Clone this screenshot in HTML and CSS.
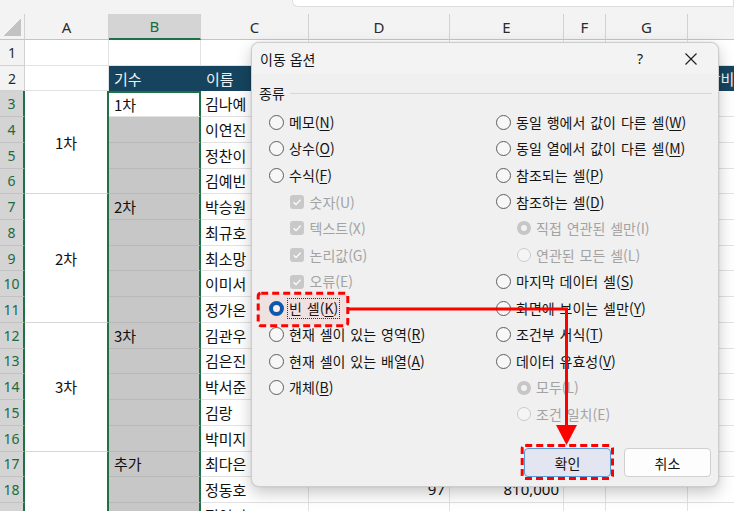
FILE: index.html
```html
<!DOCTYPE html>
<html lang="ko">
<head>
<meta charset="utf-8">
<title>이동 옵션</title>
<link rel="stylesheet" href="styles.css">
</head>
<body>
<div class="sheet">
  <div class="topbar"><div class="fbar"></div></div>
  <div class="grid">
    <div class="ch corner"></div><div class="ch">A</div><div class="ch sel">B</div><div class="ch">C</div><div class="ch">D</div><div class="ch">E</div><div class="ch">F</div><div class="ch">G</div><div class="ch">H</div>

    <div class="rh">1</div><div class="c"></div><div class="c"></div><div class="c"></div><div class="c"></div><div class="c"></div><div class="c"></div><div class="c"></div><div class="c"></div>
    <div class="rh">2</div><div class="c"></div><div class="c hd">기수</div><div class="c hd">이름</div><div class="c hd">점수</div><div class="c hd">금액</div><div class="c hd"></div><div class="c hd"></div><div class="c hd">장학비</div>

    <div class="rh s">3</div><div class="c a r4">1차</div><div class="c b act">1차</div><div class="c">김나예</div><div class="c"></div><div class="c"></div><div class="c"></div><div class="c"></div><div class="c"></div>
    <div class="rh s">4</div><div class="c b"></div><div class="c">이연진</div><div class="c"></div><div class="c"></div><div class="c"></div><div class="c"></div><div class="c"></div>
    <div class="rh s">5</div><div class="c b"></div><div class="c">정찬이</div><div class="c"></div><div class="c"></div><div class="c"></div><div class="c"></div><div class="c"></div>
    <div class="rh s">6</div><div class="c b"></div><div class="c">김예빈</div><div class="c"></div><div class="c"></div><div class="c"></div><div class="c"></div><div class="c"></div>

    <div class="rh s">7</div><div class="c a r5">2차</div><div class="c b">2차</div><div class="c">박승원</div><div class="c"></div><div class="c"></div><div class="c"></div><div class="c"></div><div class="c"></div>
    <div class="rh s">8</div><div class="c b"></div><div class="c">최규호</div><div class="c"></div><div class="c"></div><div class="c"></div><div class="c"></div><div class="c"></div>
    <div class="rh s">9</div><div class="c b"></div><div class="c">최소망</div><div class="c"></div><div class="c"></div><div class="c"></div><div class="c"></div><div class="c"></div>
    <div class="rh s">10</div><div class="c b"></div><div class="c">이미서</div><div class="c"></div><div class="c"></div><div class="c"></div><div class="c"></div><div class="c"></div>
    <div class="rh s">11</div><div class="c b"></div><div class="c">정가온</div><div class="c"></div><div class="c"></div><div class="c"></div><div class="c"></div><div class="c"></div>

    <div class="rh s">12</div><div class="c a r5">3차</div><div class="c b">3차</div><div class="c">김관우</div><div class="c"></div><div class="c"></div><div class="c"></div><div class="c"></div><div class="c"></div>
    <div class="rh s">13</div><div class="c b"></div><div class="c">김은진</div><div class="c"></div><div class="c"></div><div class="c"></div><div class="c"></div><div class="c"></div>
    <div class="rh s">14</div><div class="c b"></div><div class="c">박서준</div><div class="c"></div><div class="c"></div><div class="c"></div><div class="c"></div><div class="c"></div>
    <div class="rh s">15</div><div class="c b"></div><div class="c">김랑</div><div class="c"></div><div class="c"></div><div class="c"></div><div class="c"></div><div class="c"></div>
    <div class="rh s">16</div><div class="c b"></div><div class="c">박미지</div><div class="c"></div><div class="c"></div><div class="c"></div><div class="c"></div><div class="c"></div>

    <div class="rh s">17</div><div class="c a r3"></div><div class="c b">추가</div><div class="c">최다은</div><div class="c"></div><div class="c"></div><div class="c"></div><div class="c"></div><div class="c"></div>
    <div class="rh s">18</div><div class="c b"></div><div class="c">정동호</div><div class="c num">97</div><div class="c num">810,000</div><div class="c"></div><div class="c"></div><div class="c"></div>
    <div class="rh s">19</div><div class="c b"></div><div class="c">정연지</div><div class="c num">90</div><div class="c num">900,000</div><div class="c"></div><div class="c"></div><div class="c"></div>
  </div>
</div>

<div class="dlg">
  <div class="ttl">
    <span class="ttl-t">이동 옵션</span>
    <span class="q">?</span>
    <span class="x"><svg width="12" height="12" viewBox="0 0 12 12"><path d="M0.5 0.5 L11.5 11.5 M11.5 0.5 L0.5 11.5" stroke="#1b1b1b" stroke-width="1.1" fill="none"/></svg></span>
  </div>
  <div class="grp"><span>종류</span><i class="rule"></i></div>
  <div class="opts">
    <div class="col">
      <div class="opt"><span class="rd"></span><span>메모(<u>N</u>)</span></div>
      <div class="opt"><span class="rd"></span><span>상수(<u>O</u>)</span></div>
      <div class="opt"><span class="rd"></span><span>수식(<u>F</u>)</span></div>
      <div class="opt sub dis"><span class="cb"><svg width="14" height="14" viewBox="0 0 14 14"><path d="M3.6 7.2 L6 9.6 L10.6 4.6" stroke="#fff" stroke-width="1.3" fill="none"/></svg></span><span>숫자(U)</span></div>
      <div class="opt sub dis"><span class="cb"><svg width="14" height="14" viewBox="0 0 14 14"><path d="M3.6 7.2 L6 9.6 L10.6 4.6" stroke="#fff" stroke-width="1.3" fill="none"/></svg></span><span>텍스트(X)</span></div>
      <div class="opt sub dis"><span class="cb"><svg width="14" height="14" viewBox="0 0 14 14"><path d="M3.6 7.2 L6 9.6 L10.6 4.6" stroke="#fff" stroke-width="1.3" fill="none"/></svg></span><span>논리값(G)</span></div>
      <div class="opt sub dis"><span class="cb"><svg width="14" height="14" viewBox="0 0 14 14"><path d="M3.6 7.2 L6 9.6 L10.6 4.6" stroke="#fff" stroke-width="1.3" fill="none"/></svg></span><span>오류(E)</span></div>
      <div class="opt"><span class="rd on"></span><span class="focus">빈 셀(<u>K</u>)</span></div>
      <div class="opt"><span class="rd"></span><span>현재 셀이 있는 영역(<u>R</u>)</span></div>
      <div class="opt"><span class="rd"></span><span>현재 셀이 있는 배열(<u>A</u>)</span></div>
      <div class="opt"><span class="rd"></span><span>개체(<u>B</u>)</span></div>
    </div>
    <div class="col">
      <div class="opt"><span class="rd"></span><span>동일 행에서 값이 다른 셀(<u>W</u>)</span></div>
      <div class="opt"><span class="rd"></span><span>동일 열에서 값이 다른 셀(<u>M</u>)</span></div>
      <div class="opt"><span class="rd"></span><span>참조되는 셀(<u>P</u>)</span></div>
      <div class="opt"><span class="rd"></span><span>참조하는 셀(<u>D</u>)</span></div>
      <div class="opt sub2 dis"><span class="rd dison"></span><span>직접 연관된 셀만(I)</span></div>
      <div class="opt sub2 dis"><span class="rd disoff"></span><span>연관된 모든 셀(L)</span></div>
      <div class="opt"><span class="rd"></span><span>마지막 데이터 셀(<u>S</u>)</span></div>
      <div class="opt"><span class="rd"></span><span>화면에 보이는 셀만(<u>Y</u>)</span></div>
      <div class="opt"><span class="rd"></span><span>조건부 서식(<u>T</u>)</span></div>
      <div class="opt"><span class="rd"></span><span>데이터 유효성(<u>V</u>)</span></div>
      <div class="opt sub2 dis"><span class="rd dison"></span><span>모두(L)</span></div>
      <div class="opt sub2 dis"><span class="rd disoff"></span><span>조건 일치(E)</span></div>
    </div>
  </div>
  <div class="btns">
    <button class="btn ok">확인</button>
    <button class="btn">취소</button>
  </div>
</div>

<svg class="anno" width="734" height="511" viewBox="0 0 734 511">
  <rect x="258.2" y="293.2" width="89.6" height="32.6" rx="3" fill="rgba(255,0,0,0.06)" stroke="#ff0000" stroke-width="3" stroke-dasharray="7 4"/>
  <path d="M349 309 L566.5 309 L566.5 427" stroke="#ff0000" stroke-width="3" fill="none"/>
  <polygon points="556,425 577,425 566.5,445" fill="#ff0000"/>
  <rect x="522.2" y="445.5" width="90.3" height="33" rx="3" fill="none" stroke="#ff0000" stroke-width="3" stroke-dasharray="7 4"/>
</svg>
</body>
</html>
```
FILE: styles.css
```css
* { box-sizing: border-box; margin: 0; padding: 0; }
html, body { width: 734px; height: 511px; overflow: hidden; }
body {
  position: relative;
  background: #fff;
  color: #111;
  font-family: "Noto Sans CJK KR", "Noto Sans", sans-serif;
}

/* ---------- spreadsheet ---------- */
.sheet { width: 734px; height: 511px; overflow: hidden; background: #fff; }
.topbar { height: 14px; background: #f3f3f3; }
.fbar {
  margin-left: 292px;
  height: 7px;
  background: #fff;
  border: 1px solid #dedede;
  border-top: none;
  border-radius: 0 0 0 6px;
}
.grid {
  display: grid;
  grid-template-columns: 25px 84px 92px 108px 141px 114px 42px 82px 160px;
  grid-template-rows: 26px repeat(19, 25.73px);
  width: 848px;
}
.c {
  display: flex;
  align-items: center;
  padding: 0 4px;
  border-right: 1px solid #e2e2e2;
  border-bottom: 1px solid #e2e2e2;
  font-size: 15px;
  line-height: 1;
  white-space: nowrap;
  overflow: hidden;
  background: #fff;
}
.ch {
  display: flex;
  align-items: center;
  justify-content: center;
  background: #f3f3f3;
  border-right: 1px solid #d2d2d2;
  border-bottom: 1px solid #c4c4c4;
  font-family: "Noto Sans", sans-serif;
  font-size: 15px;
  color: #2b2b2b;
}
.ch.sel { background: #d4d4d4; color: #1c6a3e; border-bottom: 2px solid #1e7145; }
.ch.corner {
  background: #f3f3f3 linear-gradient(to bottom right, transparent 50%, #c2c2c2 50%) no-repeat right 3px bottom 3px / 17px 17px;
}
.rh {
  display: flex;
  align-items: center;
  justify-content: center;
  background: #f3f3f3;
  border-right: 1px solid #d2d2d2;
  border-bottom: 1px solid #d2d2d2;
  font-family: "Noto Sans", sans-serif;
  font-size: 14px;
  color: #2b2b2b;
}
.rh.s { background: #d4d4d4; color: #1c6a3e; border-right: 2px solid #1e7145; border-bottom-color: #c2c2c2; }

.hd { background: #16445e; color: #eef2f5; border-right-color: #16445e; border-bottom-color: #16445e; padding-left: 5px; }
.hd.last { padding-left: 0; }
.a {
  justify-content: center;
  border-right: 2px solid #1e7145;
  border-bottom: 1px solid #d6d6d6;
}
.r3 { grid-row: span 3; }
.r4 { grid-row: span 4; }
.r5 { grid-row: span 5; }
.b {
  background: #c7c7c7;
  border-right: 2px solid #1e7145;
  border-bottom: 1px solid #b9b9b9;
  padding-left: 5px;
}
.b.act { background: #fff; border-top: 2px solid #1e7145; border-bottom-color: #e2e2e2; }
.num { justify-content: flex-end; font-family: "Noto Sans", sans-serif; }

/* ---------- dialog ---------- */
.dlg {
  position: absolute;
  left: 251px;
  top: 42px;
  width: 468px;
  height: 445px;
  display: flex;
  flex-direction: column;
  background: #f0f0f0;
  border: 1px solid #cdcdcd;
  border-radius: 8px;
  box-shadow: 0 6px 16px rgba(0, 0, 0, 0.22), 0 0 2px rgba(0, 0, 0, 0.12);
  font-size: 14px;
  word-spacing: 1px;
  color: #141414;
}
.ttl {
  display: flex;
  align-items: center;
  height: 31px;
  padding: 0 15px 0 8px;
  background: #f3f3f3;
  border-radius: 8px 8px 0 0;
}
.ttl-t { flex: 1; font-size: 14px; word-spacing: 0; }
.q { width: 20px; text-align: center; margin-right: 29px; font-family: "Noto Sans", sans-serif; font-size: 14px; }
.x { width: 24px; display: flex; justify-content: center; }

.grp {
  display: flex;
  align-items: center;
  gap: 5px;
  height: 20px;
  margin: 9px 6px 0 7px;
}
.rule { flex: 1; height: 1px; background: #d7d7d7; }

.opts {
  display: grid;
  grid-template-columns: 227px 1fr;
  padding-left: 17px;
  margin-top: 6px;
}
.col { display: flex; flex-direction: column; }
.opt {
  display: flex;
  align-items: center;
  gap: 5px;
  height: 26.55px;
  white-space: nowrap;
  line-height: 1.2;
}
.opt u { text-decoration-thickness: 1px; text-underline-offset: 2px; }
.sub { padding-left: 21px; gap: 5.5px; }
.sub2 { padding-left: 21px; }
.dis { color: #a3a3a3; }

.rd {
  flex: none;
  width: 15px;
  height: 15px;
  border-radius: 50%;
  border: 1px solid #5e5e5e;
  background: #f7f7f7;
}
.rd.on { border: 4.5px solid #005fb8; background: #fff; }
.rd.dison { width: 14px; height: 14px; border: 4px solid #c6c6c6; background: #f2f2f2; }
.rd.disoff { width: 14px; height: 14px; border: 1px solid #cbcbcb; background: #f5f5f5; }
.cb {
  flex: none;
  width: 14px;
  height: 14px;
  border-radius: 3px;
  background: #c9c9c9;
  display: flex;
}
.focus { outline: 1px dotted #333; outline-offset: 1px; }

.btns {
  margin-top: auto;
  display: flex;
  justify-content: flex-end;
  gap: 13px;
  padding: 0 7px 9px 0;
}
.btn {
  width: 87px;
  height: 29px;
  border: 1px solid #d0d0d0;
  border-radius: 4px;
  background: #fdfdfd;
  font-family: "Noto Sans CJK KR", "Noto Sans", sans-serif;
  font-size: 14px;
  color: #141414;
}
.btn.ok { background: #e3e6f0; border-color: #5a9ad8; }

/* ---------- annotations ---------- */
.anno { position: absolute; left: 0; top: 0; pointer-events: none; }
```
